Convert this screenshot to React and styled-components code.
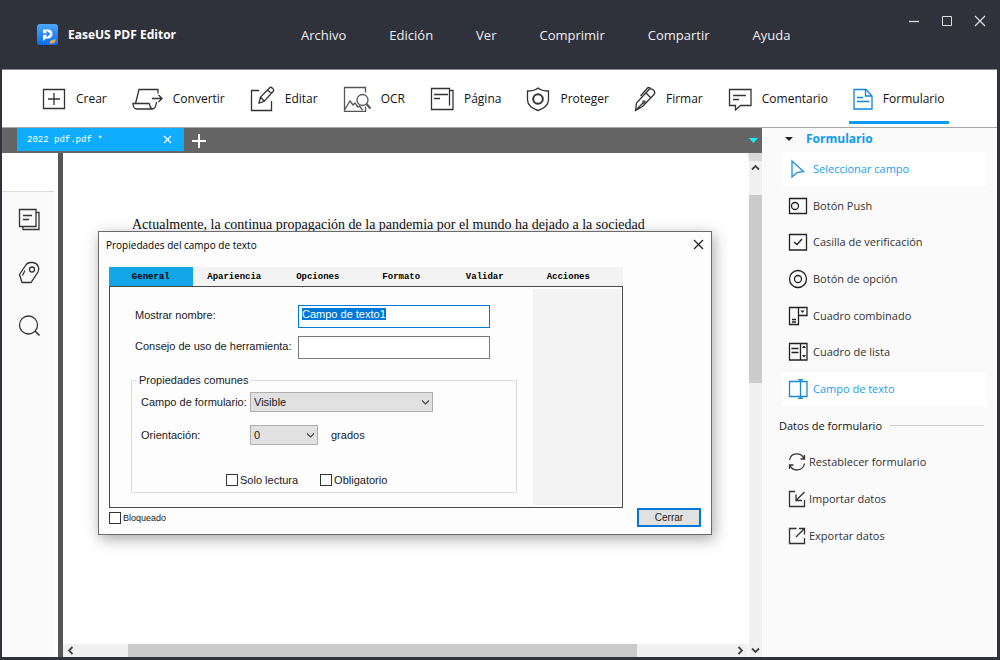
import React, { useEffect, useRef } from 'react';
import { styled, createGlobalStyle } from 'styled-components';

const GlobalStyle = createGlobalStyle`
	*{margin: 0;padding: 0;box-sizing: border-box;}
	body{background: #2f313b;font-family: 'Open Sans', 'Noto Sans', sans-serif;}
	ul,ol,li{list-style: none;}
	button,input,select{font: inherit;color: inherit;border-radius: 0;}
	button{border: 0;background: none;cursor: pointer;}
	svg{display: block;flex: none;}
`;

const Window = styled.div`
	display: flex;
	flex-direction: column;
	min-height: 100vh;
	padding: 0 3px 3px 2px;
	background: #2f313b;
`;

/* title bar */
const Header = styled.header`
	display: flex;
	align-items: center;
	height: 69px;
	padding: 0 11px 0 35px;
	color: #fff;
`;

const Brand = styled.h1`
	display: flex;
	align-items: center;
	gap: 10px;
	width: 264px;
	font-size: 12px;
	font-weight: 700;
	line-height: 20px;
`;

const Menu = styled.ul`
	display: flex;
	flex: 1;
	gap: 43px;
	font-size: 13px;
	line-height: 20px;
	color: #f0f0f0;
`;

const WindowButtons = styled.div`
	display: flex;
	align-self: flex-start;
	gap: 21px;
	padding-top: 15px;
`;

/* tool bar */
const Toolbar = styled.nav`
	display: flex;
	gap: 25px;
	height: 59px;
	padding: 0 40px;
	background: #fff;
	border-top: 1px solid #8a8b90;
	border-bottom: 1px solid #a5a5a5;
	overflow: hidden;
`;

const Tool = styled.button`
	display: flex;
	align-items: center;
	gap: 10px;
	margin-left: ${(p) => (p.$active ? '-4px' : 0)};
	padding: ${(p) => (p.$active ? '6px 4px 0' : '6px 0 3px')};
	border-bottom: ${(p) => (p.$active ? '3px solid #0a9cf5' : 0)};
	height: 54px;
	font-size: 12px;
	line-height: 20px;
	color: #111;
	white-space: nowrap;
`;

const Workspace = styled.div`
	position: relative;
	display: flex;
	flex: 1;
	background: #fafafa;
`;

const Editor = styled.main`
	display: flex;
	flex: 1;
	flex-direction: column;
	min-width: 0;
`;

const TabBar = styled.div`
	display: flex;
	align-items: center;
	height: 25px;
	padding: 0 4px 0 15px;
	background: #656565;
`;

const FileTab = styled.div`
	display: flex;
	align-items: center;
	align-self: flex-start;
	justify-content: space-between;
	width: 167px;
	height: 23px;
	padding: 0 12px 0 10px;
	background: #10adff;
	color: #fff;
	font-family: 'Liberation Mono', monospace;
	font-size: 9px;
`;

const AddTab = styled.button`
	flex: 1;
	padding-left: 8px;
`;

const Row = styled.div`
	display: flex;
	flex: 1;
	min-width: 0;
`;

/* left rail */
const Rail = styled.aside`
	display: flex;
	flex-direction: column;
	width: 61px;
	padding-right: 4px;
	background: #fff;
	border-right: 5px solid #555;
`;

const RailTop = styled.div`
	height: 39px;
	border-bottom: 1px solid #ddd;
`;

const RailButtons = styled.div`
	display: flex;
	flex: 1;
	flex-direction: column;
	align-items: center;
	gap: 30px;
	padding: 16px 0 0 2px;
	background: #fafafa;
`;

/* document */
const Document = styled.div`
	display: flex;
	flex: 1;
	flex-direction: column;
	min-width: 0;
	background: #fff;
`;

const Page = styled.div`
	flex: 1;
	padding: 62px 69px 0;
	font-family: 'Liberation Serif', serif;
	font-size: 14px;
	line-height: 20px;
	color: #111;
	white-space: nowrap;
	overflow: hidden;
`;

const HorizontalBar = styled.div`
	display: flex;
	align-items: center;
	height: 13px;
	padding: 0 3px;
	background: #f0f0f0;
`;

const HorizontalThumb = styled.div`
	width: 75%;
	height: 13px;
	margin: 0 auto 0 53px;
	background: #cbcbcb;
`;

const VerticalBar = styled.div`
	display: flex;
	flex-direction: column;
	align-items: center;
	width: 14px;
	border-top: 8px solid #dadada;
	border-left: 1px solid #fff;
	background: #f0f0f0;
`;

const VerticalThumb = styled.div`
	width: 100%;
	height: 38%;
	margin: 21px 0 auto;
	background: #cbcbcb;
`;

const ScrollButton = styled.button`
	display: flex;
	align-items: center;
	height: 13px;
`;

/* form panel */
const Panel = styled.aside`
	width: 235px;
	padding: 0 10px 0 16px;
	border-left: 1px solid #fff;
	font-size: 11px;
	line-height: 18px;
	color: #333;
`;

const PanelTitle = styled.h2`
	display: flex;
	align-items: center;
	gap: 13px;
	height: 22px;
	margin-bottom: 2px;
	padding-left: 6px;
	font-size: 12px;
	color: #0a9cf5;
`;

const FieldList = styled.ul`
	display: flex;
	flex-direction: column;
	justify-content: space-between;
	height: 254px;
	margin-left: 3px;
`;

const PanelButton = styled.button`
	display: flex;
	align-items: center;
	gap: ${(p) => (p.$tight ? '3px' : '5px')};
	width: 100%;
	height: 34px;
	padding-left: 6px;
	background: ${(p) => (p.$active ? '#fff' : 'none')};
	color: ${(p) => (p.$active ? '#1a9df0' : 'inherit')};
`;

const DataTitle = styled.h3`
	display: flex;
	align-items: center;
	gap: 8px;
	height: 39px;
	font-size: 11px;
	font-weight: 400;
	color: #111;

	&::after {
		content: '';
		flex: 1;
		height: 1px;
		margin-right: 3px;
		background: #ccc;
	}
`;

const DataList = styled.ul`
	display: flex;
	flex-direction: column;
	gap: 3px;
	margin-left: 3px;
`;

/* properties dialog */
const Dialog = styled.section`
	position: absolute;
	top: 103px;
	left: 96px;
	width: 614px;
	border: 1px solid #6b6b6b;
	padding: 0 10px 7px;
	background: #fdfdfd;
	box-shadow: 2px 4px 14px rgba(0, 0, 0, 0.35);
	font-family: 'Liberation Sans', Arial, sans-serif;
	font-size: 11px;
	line-height: 16px;
	color: #1a1a1a;
	white-space: nowrap;
`;

const DialogHeader = styled.header`
	display: flex;
	align-items: center;
	justify-content: space-between;
	height: 25px;
	margin: 0 -3px 10px;
	font-family: 'Open Sans', 'Noto Sans', sans-serif;
`;

const DialogTitle = styled.h2`
	font-size: 10px;
	font-weight: 400;
	color: #000;
`;

const DialogBody = styled.div`
	width: 514px;
`;

const Tabs = styled.div`
	display: flex;
	height: 19px;
	padding-right: 13px;
	background: #f3f3f3;
`;

const Tab = styled.button`
	flex: 1;
	background: ${(p) => (p.$active ? '#12a5e8' : 'none')};
	font-family: 'Liberation Mono', monospace;
	font-size: 9px;
	font-weight: 700;
	line-height: 16px;
	color: #000;
`;

const TabPanel = styled.div`
	display: flex;
	justify-content: space-between;
	height: 222px;
	padding: 2px 1px 2px 21px;
	border: 1px solid #4a4a4a;
`;

const Blank = styled.div`
	width: 88px;
	background: #f3f3f3;
`;

const Form = styled.form`
	width: 386px;
	padding-top: 16px;
`;

const Field = styled.div`
	display: grid;
	grid-template-columns: 163px 192px;
	height: 31px;
	padding-left: 4px;
`;

const Label = styled.label`
	padding-top: 2px;
`;

const TextInput = styled.input`
	height: 23px;
	padding: 0 3px 5px;
	border: 1px solid #7a7a7a;
	background: #fff;
	outline: none;

	&:focus {
		border-color: #0078d7;
	}

	&::selection {
		background: #0078d7;
		color: #fff;
	}
`;

const Group = styled.fieldset`
	height: 121px;
	margin-top: 5px;
	padding: 4px 9px 0;
	border: 1px solid #dcdcdc;
`;

const Legend = styled.legend`
	margin-left: -4px;
	padding: 0 2px;
`;

const Line = styled.div`
	display: grid;
	grid-template-columns: 109px auto 1fr;
	align-items: center;
	height: 20px;
	margin-bottom: 13px;
`;

const SelectBox = styled.div`
	display: grid;
	align-items: center;
	width: ${(p) => (p.$wide ? '183px' : '68px')};

	select,
	svg {
		grid-area: 1 / 1;
	}

	svg {
		justify-self: end;
		margin-right: 3px;
		pointer-events: none;
	}
`;

const Select = styled.select`
	appearance: none;
	width: 100%;
	height: 20px;
	padding: 0 3px;
	border: 1px solid #adadad;
	background: #e1e1e1;
`;

const Unit = styled.span`
	padding-left: 13px;
`;

const Checks = styled.div`
	display: flex;
	gap: 22px;
	padding: 14px 0 0 85px;
`;

const Check = styled.label`
	display: flex;
	align-items: center;
	gap: 2px;
	font-size: ${(p) => (p.$small ? '9px' : '11px')};
`;

const CheckBox = styled.input`
	appearance: none;
	width: 12px;
	height: 12px;
	border: 1px solid #333;
	background: #fff;

	&:checked {
		background: #0078d7;
	}
`;

const DialogFooter = styled.footer`
	display: flex;
	align-items: center;
	justify-content: space-between;
	height: 19px;
`;

const CloseButton = styled.button`
	width: 64px;
	height: 19px;
	border: 2px solid #0078d7;
	background: #e1e1e1;
	font-size: 10px;
	line-height: 14px;
`;

function Icon({ w, h, color = '#333', children }) {
	return (
		<svg width={w} height={h} viewBox={`0 0 ${w} ${h}`} fill="none" stroke={color} strokeWidth="1.3" aria-hidden="true">
			{children}
		</svg>
	);
}

const Cross = ({ size, color }) => (
	<Icon w={size} h={size} color={color}>
		<path d={`M1 1L${size - 1} ${size - 1}M${size - 1} 1L1 ${size - 1}`} />
	</Icon>
);

const Chevron = ({ turn = 0, color = '#444', width = 1.8 }) => (
	<svg width="9" height="9" viewBox="0 0 9 9" fill="none" stroke={color} strokeWidth={width} aria-hidden="true">
		<path d="M1 2.5L4.5 6L8 2.5" transform={`rotate(${turn} 4.5 4.5)`} />
	</svg>
);

const Logo = () => (
	<svg width="21" height="21" viewBox="0 0 21 21" fill="none" aria-hidden="true">
		<defs>
			<linearGradient id="logo" x1="0" y1="0" x2="0" y2="1">
				<stop offset="0" stopColor="#4aa8fb" />
				<stop offset="1" stopColor="#0c6cf0" />
			</linearGradient>
		</defs>
		<rect width="21" height="21" rx="3" fill="url(#logo)" />
		<path d="M6 5.5h5a4.300 4.300 0 0 1 0 9H9L6 17v-4z" fill="#fff" />
		<path d="M4 10h8M9.500 7.500l2.800 2.500l-2.800 2.500" stroke="#1c80f5" strokeWidth="1.400" />
		<path d="M12.500 19.500c.5-3 2.500-4.500 6.500-4c-.5 2.500-2 4-4 4z" fill="#f5a53a" />
	</svg>
);

const tools = [
	{
		name: 'Crear',
		icon: (
			<Icon w={24} h={24}>
				<path d="M1.500 2.500h21v19h-21zM12 6v12M6 12h12" />
			</Icon>
		),
	},
	{
		name: 'Convertir',
		icon: (
			<Icon w={31} h={24}>
				<path d="M26 6.500V2.500H7L3.500 16.500M1 16.500h16c1 0 .5 5.500 3.500 5.500H5c-2.500 0-4-2.500-4-5.500zM20.500 22c2.500 0 3.500-3 4-7M20 11.500h10M26.500 8l3.500 3.500l-3.500 3.500" />
			</Icon>
		),
	},
	{
		name: 'Editar',
		icon: (
			<Icon w={25} h={26}>
				<path d="M9 4.500H1.500v20h20V15M9 17l1.500-6L20 1.500c1-1 4.500 2 3.500 3.500L14 15.500zM10.500 11l3.500 4M17.500 4l4 3.500" />
			</Icon>
		),
	},
	{
		name: 'OCR',
		icon: (
			<Icon w={28} h={26} color="#555">
				<path d="M22.500 6.500V1.500h-21v24h21v-5M1.500 24l5.500-9l3 4l2-2l3 4l1.500-1l3 4" />
				<circle cx="19.500" cy="14" r="5.500" />
				<path d="M23.500 18l4 4.500" strokeWidth="2" />
			</Icon>
		),
	},
	{
		name: 'Página',
		icon: (
			<Icon w={24} h={24}>
				<path d="M19.500 18.500V1.500h-18v21h21.500v-19h-3.500M4 7.500h14M4 11.500h6" />
			</Icon>
		),
	},
	{
		name: 'Proteger',
		icon: (
			<Icon w={24} h={26}>
				<path d="M12 2C9 4.500 5 5 1.500 5v9c0 5 5 9 10.500 10.500C17.500 23 22.500 19 22.500 14V5C19 5 15 4.500 12 2z" />
				<circle cx="12" cy="13" r="4.800" strokeWidth="2" />
			</Icon>
		),
	},
	{
		name: 'Firmar',
		icon: (
			<Icon w={22} h={26}>
				<path d="M1.500 24.500l1-7.500L14.500 4c3-3 8 1.500 5.500 4.500L8.500 20.500zM2 24l7-7M12 7l5 5M6.500 10L14 1.500l2.500 .5" />
				<circle cx="10" cy="16" r="1.200" />
			</Icon>
		),
	},
	{
		name: 'Comentario',
		icon: (
			<Icon w={24} h={24}>
				<path d="M1.500 2.500h21.500v16H12.500l-5 4.500v-4.500h-6zM5 8.500h13M5 12.500h6" />
			</Icon>
		),
	},
	{
		name: 'Formulario',
		active: true,
		icon: (
			<Icon w={20} h={24} color="#0f86d8">
				<path d="M1 2.500h12l6 6.500v13H1zM12.500 2.500V9H19M4 10.500h6M4 14.500h12.500" />
			</Icon>
		),
	},
];

const fields = [
	{
		name: 'Seleccionar campo',
		active: true,
		icon: (
			<Icon w={20} h={20} color="#1a8fe0">
				<path d="M4 2v16l5-4.500l6.500-1z" />
			</Icon>
		),
	},
	{
		name: 'Botón Push',
		icon: (
			<Icon w={20} h={20} color="#222">
				<path d="M1.500 2.500h17v15h-17z" />
				<circle cx="7" cy="10" r="3.500" />
			</Icon>
		),
	},
	{
		name: 'Casilla de verificación',
		icon: (
			<Icon w={20} h={20} color="#222">
				<path d="M1.500 2.500h17v15.500h-17zM6 10l3 2.500l5-5.500" />
			</Icon>
		),
	},
	{
		name: 'Botón de opción',
		icon: (
			<Icon w={20} h={20} color="#222">
				<circle cx="10" cy="10" r="8.500" />
				<circle cx="10" cy="10" r="3.500" />
			</Icon>
		),
	},
	{
		name: 'Cuadro combinado',
		icon: (
			<Icon w={20} h={20} color="#222">
				<path d="M10.500 1.500V18.500h-9v-17h17.500v8h-8.500M4 13.500h4M4 16h4" />
				<path d="M12.500 4.500h4l-2 2.500z" fill="#222" stroke="none" />
			</Icon>
		),
	},
	{
		name: 'Cuadro de lista',
		icon: (
			<Icon w={20} h={20} color="#222">
				<path d="M1.500 1.500h17.500v16.500h-17.500zM12.500 1.500v16.500M3.500 6.500h7M3.500 10.500h7" />
				<path d="M14 6h4l-2-2.500zM14 13h4l-2 2.500z" fill="#222" stroke="none" />
			</Icon>
		),
	},
	{
		name: 'Campo de texto',
		active: true,
		icon: (
			<Icon w={20} h={20} color="#1a86d0">
				<path d="M1.500 2.500h17.500v15h-17.500zM12.500 1v18.500M10 .500h5M10 19.500h5" />
			</Icon>
		),
	},
];

const dataActions = [
	{
		name: 'Restablecer formulario',
		icon: (
			<Icon w={18} h={20}>
				<path d="M1.500 8C3 0 13 0 16 6.500M16.500 3v4h-4M16.500 11.500C15 19.500 5 20 2 13.500M1.500 17v-4h4" />
			</Icon>
		),
	},
	{
		name: 'Importar datos',
		icon: (
			<Icon w={18} h={20}>
				<path d="M7 2.500h-5.500v15h15V11M16.500 3L8 11.500M8 5.500v6h6" />
			</Icon>
		),
	},
	{
		name: 'Exportar datos',
		icon: (
			<Icon w={18} h={20}>
				<path d="M8.500 2.500h-7v15h15V12M8 11l8.500-8.500M11 2.500h5.500v6" />
			</Icon>
		),
	},
];

const menu = ['Archivo', 'Edición', 'Ver', 'Comprimir', 'Compartir', 'Ayuda'];
const dialogTabs = ['General', 'Apariencia', 'Opciones', 'Formato', 'Validar', 'Acciones'];

function PropertiesDialog() {
	const nameRef = useRef(null);

	useEffect(() => {
		nameRef.current.focus();
		nameRef.current.select();
	}, []);

	return (
		<Dialog role="dialog" aria-labelledby="dialog-title">
			<DialogHeader>
				<DialogTitle id="dialog-title">Propiedades del campo de texto</DialogTitle>
				<button aria-label="Cerrar ventana">
					<Cross size={11} color="#222" />
				</button>
			</DialogHeader>
			<DialogBody>
				<Tabs role="tablist">
					{dialogTabs.map((name, i) => (
						<Tab key={name} role="tab" aria-selected={i === 0} $active={i === 0}>
							{name}
						</Tab>
					))}
				</Tabs>
				<TabPanel role="tabpanel">
					<Form>
						<Field>
							<Label htmlFor="name">Mostrar nombre:</Label>
							<TextInput id="name" ref={nameRef} defaultValue="Campo de texto1" />
						</Field>
						<Field>
							<Label htmlFor="hint">Consejo de uso de herramienta:</Label>
							<TextInput id="hint" />
						</Field>
						<Group>
							<Legend>Propiedades comunes</Legend>
							<Line>
								<label htmlFor="visibility">Campo de formulario:</label>
								<SelectBox $wide>
									<Select id="visibility">
										<option>Visible</option>
									</Select>
									<Chevron width={1.2} />
								</SelectBox>
							</Line>
							<Line>
								<label htmlFor="orientation">Orientación:</label>
								<SelectBox>
									<Select id="orientation">
										<option>0</option>
									</Select>
									<Chevron width={1.2} />
								</SelectBox>
								<Unit>grados</Unit>
							</Line>
							<Checks>
								<Check>
									<CheckBox type="checkbox" />
									Solo lectura
								</Check>
								<Check>
									<CheckBox type="checkbox" />
									Obligatorio
								</Check>
							</Checks>
						</Group>
					</Form>
					<Blank />
				</TabPanel>
			</DialogBody>
			<DialogFooter>
				<Check $small>
					<CheckBox type="checkbox" />
					Bloqueado
				</Check>
				<CloseButton>Cerrar</CloseButton>
			</DialogFooter>
		</Dialog>
	);
}

function App() {
	return (
		<>
			<GlobalStyle />
			<Window>
				<Header>
					<Brand>
						<Logo />
						EaseUS PDF Editor
					</Brand>
					<Menu>
						{menu.map((name) => (
							<li key={name}>
								<button>{name}</button>
							</li>
						))}
					</Menu>
					<WindowButtons>
						<button aria-label="Minimizar">
							<Icon w={12} h={12} color="#ddd">
								<path d="M1 6.500h10" />
							</Icon>
						</button>
						<button aria-label="Maximizar">
							<Icon w={12} h={12} color="#ddd">
								<path d="M1.500 1.500h9v9h-9z" strokeWidth="1" />
							</Icon>
						</button>
						<button aria-label="Cerrar">
							<Cross size={12} color="#ddd" />
						</button>
					</WindowButtons>
				</Header>

				<Toolbar>
					{tools.map((tool) => (
						<Tool key={tool.name} $active={tool.active}>
							{tool.icon}
							{tool.name}
						</Tool>
					))}
				</Toolbar>

				<Workspace>
					<Editor>
						<TabBar>
							<FileTab>
								2022 pdf.pdf *
								<button aria-label="Cerrar pestaña">
									<Cross size={9} color="#fff" />
								</button>
							</FileTab>
							<AddTab aria-label="Nueva pestaña">
								<Icon w={14} h={14} color="#fff">
									<path d="M7 0v14M0 7h14" strokeWidth="2" />
								</Icon>
							</AddTab>
							<button aria-label="Lista de pestañas">
								<Icon w={9} h={5} color="none">
									<path d="M0 0h9L4.500 5z" fill="#12f0ff" />
								</Icon>
							</button>
						</TabBar>
						<Row>
							<Rail>
								<RailTop />
								<RailButtons>
									<button aria-label="Páginas">
										<Icon w={23} h={23}>
											<path d="M1.500 1.500h16.500v17h-16.500zM18 4.500h3v17H5v-3M5 7.500h9M5 11.500h6" />
										</Icon>
									</button>
									<button aria-label="Marcadores">
										<Icon w={23} h={23}>
											<path d="M1.500 13.500L4 21.500h9L20 11c2-3.500 0-9-5-9.500h-2.500c-3 0-4 1.500-5 3zM4.500 14.500L7 9.500" />
											<circle cx="14" cy="8.500" r="2.500" />
										</Icon>
									</button>
									<button aria-label="Buscar">
										<Icon w={23} h={23}>
											<circle cx="10.500" cy="11" r="9" />
											<path d="M17 17l4.500 4.500" strokeWidth="1.600" />
										</Icon>
									</button>
								</RailButtons>
							</Rail>
							<Document>
								<Page>
									<p>Actualmente, la continua propagación de la pandemia por el mundo ha dejado a la sociedad</p>
								</Page>
								<HorizontalBar>
									<ScrollButton aria-label="Izquierda">
										<Chevron turn={90} />
									</ScrollButton>
									<HorizontalThumb />
									<ScrollButton aria-label="Derecha">
										<Chevron turn={-90} />
									</ScrollButton>
								</HorizontalBar>
							</Document>
							<VerticalBar>
								<ScrollButton aria-label="Arriba">
									<Chevron turn={180} />
								</ScrollButton>
								<VerticalThumb />
								<ScrollButton aria-label="Abajo">
									<Chevron />
								</ScrollButton>
							</VerticalBar>
						</Row>
					</Editor>

					<Panel>
						<PanelTitle>
							<Icon w={8} h={5} color="none">
								<path d="M0 0h8L4 4z" fill="#222" />
							</Icon>
							Formulario
						</PanelTitle>
						<FieldList>
							{fields.map((field) => (
								<li key={field.name}>
									<PanelButton $active={field.active}>
										{field.icon}
										{field.name}
									</PanelButton>
								</li>
							))}
						</FieldList>
						<DataTitle>Datos de formulario</DataTitle>
						<DataList>
							{dataActions.map((action) => (
								<li key={action.name}>
									<PanelButton $tight>
										{action.icon}
										{action.name}
									</PanelButton>
								</li>
							))}
						</DataList>
					</Panel>

					<PropertiesDialog />
				</Workspace>
			</Window>
		</>
	);
}

export default App;
